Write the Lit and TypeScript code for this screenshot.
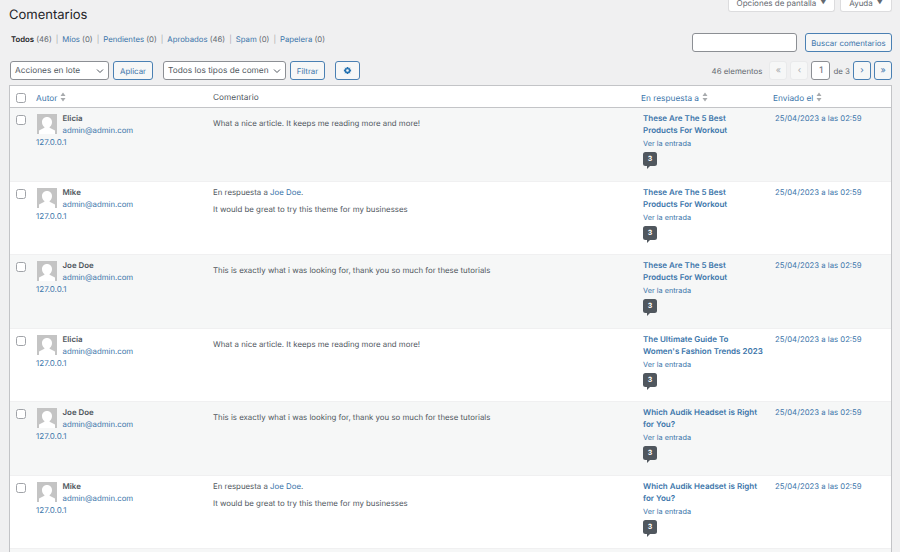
import { LitElement, html, css } from 'lit';
import { customElement } from 'lit/decorators.js';

const ELICIA = { name: 'Elicia', text: 'What a nice article. It keeps me reading more and more!', reply: false };
const MIKE = { name: 'Mike', text: 'It would be great to try this theme for my businesses', reply: true };
const JOE = { name: 'Joe Doe', text: 'This is exactly what i was looking for, thank you so much for these tutorials', reply: false };

const WORKOUT = ['These Are The 5 Best', 'Products For Workout'];
const FASHION = ['The Ultimate Guide To', "Women's Fashion Trends 2023"];
const AUDIK = ['Which Audik Headset is Right', 'for You?'];

const ROWS = [
  { ...ELICIA, post: WORKOUT },
  { ...MIKE, post: WORKOUT },
  { ...JOE, post: WORKOUT },
  { ...ELICIA, post: FASHION },
  { ...JOE, post: AUDIK },
  { ...MIKE, post: AUDIK },
];

const LINKS = [
  ['Todos', 46],
  ['Míos', 0],
  ['Pendientes', 0],
  ['Aprobados', 46],
  ['Spam', 0],
  ['Papelera', 0],
];

@customElement('app-root')
export class AppRoot extends LitElement {
  static styles = css`
    :host {
      display: block;
      height: 552px;
      overflow: hidden;
      background: #f0f0f1;
      color: #50575e;
      font-family: Inter, 'Liberation Sans', sans-serif;
      font-size: 7.85px;
      line-height: 12px;
      padding: 0 8px 0 9px;
      box-sizing: border-box;
      text-rendering: geometricPrecision;
    }

    a {
      color: #3b75aa;
      text-decoration: none;
    }

    .meta {
      display: flex;
      justify-content: flex-end;
      gap: 5px;
      height: 12px;
    }

    .tab {
      display: flex;
      align-items: flex-end;
      justify-content: center;
      gap: 4px;
      height: 12px;
      box-sizing: border-box;
      padding-bottom: 5px;
      background: #fff;
      border: 1px solid #dcdcde;
      border-top: none;
      border-radius: 0 0 3px 3px;
      color: #646970;
      font-size: 8px;
      line-height: 6px;
    }

    .tab.screen { width: 107px; }
    .tab.help { width: 52px; }
    .tab span.arrow { font-size: 6px; }

    h1 {
      margin: -5px 0 0;
      font-size: 13px;
      font-weight: 400;
      line-height: 16px;
      color: #1d2327;
    }

    .filters {
      display: flex;
      justify-content: space-between;
      align-items: flex-start;
      margin-top: 9px;
    }

    .views {
      display: flex;
      margin: 0 0 0 2px;
      padding: 1px 0 0;
      list-style: none;
      font-size: 7.75px;
      line-height: 12px;
      color: #646970;
    }

    .views li { white-space: pre; }
    .views .sep { color: #a7aaad; padding: 0 4px; }
    .views .current { color: #1d2327; font-weight: 600; }

    .search {
      display: flex;
      gap: 8px;
      margin-top: 1px;
    }

    .search .box {
      width: 105px;
      height: 19px;
      box-sizing: border-box;
      background: #fff;
      border: 1px solid #8c8f94;
      border-radius: 3px;
    }

    .btn {
      display: flex;
      align-items: center;
      justify-content: center;
      height: 19px;
      box-sizing: border-box;
      border: 1px solid #4a80b3;
      border-radius: 3px;
      background: #f6f7f7;
      color: #3b75aa;
      font-size: 7.9px;
    }

    .toolbar {
      display: flex;
      align-items: center;
      margin-top: 9px;
      height: 19px;
    }

    .select {
      display: flex;
      align-items: center;
      height: 19px;
      box-sizing: border-box;
      background: #fff;
      border: 1px solid #8c8f94;
      border-radius: 3px;
      padding-left: 4px;
      font-size: 8.3px;
      position: relative;
      white-space: nowrap;
      overflow: hidden;
    }

    .select svg {
      position: absolute;
      right: 4px;
      top: 6px;
      background: #fff;
    }

    .pager {
      display: flex;
      align-items: center;
      margin-left: auto;
      gap: 3px;
      color: #646970;
      font-size: 7.9px;
    }

    .pager .count { margin-right: 4px; }

    .page {
      display: flex;
      align-items: center;
      justify-content: center;
      width: 18px;
      height: 19px;
      box-sizing: border-box;
      border-radius: 3px;
      font-size: 9px;
    }

    .page.off {
      background: #f6f7f7;
      border: 1px solid #e9eaeb;
      color: #a7aaad;
    }

    .page.on {
      background: #f6f7f7;
      border: 1px solid #4a80b3;
      color: #3b75aa;
    }

    .page.num {
      width: 19px;
      background: #fff;
      border: 1px solid #8c8f94;
      color: #646970;
    }

    table {
      width: 883px;
      margin-top: 5px;
      table-layout: fixed;
      border-collapse: separate;
      border-spacing: 0;
      background: #fff;
      border: 1px solid #c3c4c7;
    }

    th {
      height: 22px;
      padding: 3px 0 0;
      box-sizing: border-box;
      text-align: left;
      font-weight: 400;
      font-size: 8.3px;
      border-bottom: 1px solid #c3c4c7;
      color: #50575e;
    }

    th .sort {
      display: inline-block;
      vertical-align: -1px;
      margin-left: 3px;
    }

    td {
      height: 73.5px;
      padding: 4px 0 0;
      box-sizing: border-box;
      vertical-align: top;
      border-bottom: 1px solid #f0f0f1;
    }

    tr.odd td { background: #f6f7f7; }

    .check {
      display: block;
      width: 10px;
      height: 10px;
      margin-left: 6px;
      box-sizing: border-box;
      background: #fff;
      border: 1px solid #a0a3a8;
      border-radius: 2.5px;
    }

    td .check { margin-top: 3px; }

    .who {
      display: flex;
      gap: 5.5px;
    }

    .avatar {
      display: block;
      width: 20px;
      height: 20px;
      margin: 2px 0 0 1px;
    }

    .who .name {
      font-weight: 600;
      color: #50575e;
      font-size: 7.9px;
    }

    .who a {
      font-size: 7.8px;
    }

    .ip {
      display: block;
      font-size: 8px;
    }

    .body p {
      margin: 0;
    }

    .body p.quote {
      margin: 0 0 5px;
    }

    .body p.only {
      margin-top: 5px;
    }

    .post {
      display: block;
      padding-left: 2px;
      font-weight: 600;
      font-size: 8px;
      white-space: nowrap;
    }

    .view {
      display: block;
      padding-left: 2px;
      margin-top: 2px;
      font-size: 7.3px;
    }

    .bubble {
      display: block;
      position: relative;
      width: 14px;
      height: 14px;
      margin: 2px 0 0 2px;
      background: #50575e;
      border-radius: 2.5px;
      color: #fff;
      font-size: 7px;
      font-weight: 700;
      line-height: 14px;
      text-align: center;
    }

    .bubble::after {
      content: '';
      position: absolute;
      left: 4px;
      bottom: -3px;
      border-top: 3px solid #50575e;
      border-right: 3px solid transparent;
    }

    .sent {
      display: block;
      padding-left: 2px;
      font-size: 7.75px;
    }
  `;

  private sortIcon() {
    return html`<svg class="sort" width="6" height="10" viewBox="0 0 6 10"><path d="M3 0.5 5.500 4H.5z M3 9.500 .5 6h5z" fill="#a7aaad"/></svg>`;
  }

  private chevron() {
    return html`<svg width="8" height="6" viewBox="0 0 8 6"><path d="M1 1.500 4 4.500 7 1.500" fill="none" stroke="#50575e" stroke-width="1"/></svg>`;
  }

  private avatar() {
    return html`<svg class="avatar" viewBox="0 0 20 20">
      <rect width="20" height="20" fill="#c4c4c4"/>
      <path d="M10 3c3 0 5 2.200 5 5.200 0 2-1 3.800-2.400 4.800v.8L18 16.500V20H2v-3.500L7.400 13.800V13C6 12 5 10.200 5 8.200 5 5.200 7 3 10 3z" fill="#fff"/>
    </svg>`;
  }

  render() {
    return html`
      <div class="meta">
        <div class="tab screen">Opciones de pantalla <span class="arrow">▼</span></div>
        <div class="tab help">Ayuda <span class="arrow">▼</span></div>
      </div>
      <h1>Comentarios</h1>

      <div class="filters">
        <ul class="views">
          ${LINKS.map(([label, count], i) => html`
            <li>${i === 0
              ? html`<span class="current">${label}</span>`
              : html`<a href="#">${label}</a>`} (${count})${i < LINKS.length - 1 ? html`<span class="sep">|</span>` : ''}</li>
          `)}
        </ul>
        <div class="search">
          <div class="box"></div>
          <div class="btn" style="width:87px">Buscar comentarios</div>
        </div>
      </div>

      <div class="toolbar">
        <div class="select" style="width:99px;margin-left:1px">Acciones en lote${this.chevron()}</div>
        <div class="btn" style="width:40px;margin-left:4px">Aplicar</div>
        <div class="select" style="width:123px;margin-left:10px">Todos los tipos de comen${this.chevron()}</div>
        <div class="btn" style="width:35px;margin-left:4px">Filtrar</div>
        <div class="btn" style="width:25px;margin-left:10px">
          <svg width="9" height="9" viewBox="0 0 20 20"><path fill="#2271b1" d="M18 12h-2.180c-.170.700-.470 1.350-.850 1.940L16.500 15.500 15.500 16.500l-1.560-1.530c-.590.380-1.240.680-1.940.850V18H8v-2.180c-.700-.170-1.350-.470-1.940-.850L4.500 16.500 3.500 15.500l1.530-1.560c-.380-.590-.680-1.240-.850-1.940H2V8h2.180c.170-.700.470-1.350.850-1.940L3.500 4.500 4.500 3.500l1.560 1.530c.590-.380 1.240-.680 1.940-.850V2h4v2.180c.700.170 1.350.470 1.940.850L15.500 3.500 16.500 4.500l-1.530 1.560c.380.590.680 1.240.850 1.940H18v4zM10 13a3 3 0 1 0 0-6 3 3 0 0 0 0 6z"/></svg>
        </div>
        <div class="pager">
          <span class="count">46 elementos</span>
          <span class="page off">«</span>
          <span class="page off">‹</span>
          <span class="page num">1</span>
          <span>de 3</span>
          <span class="page on">›</span>
          <span class="page on">»</span>
        </div>
      </div>

      <table>
        <colgroup>
          <col style="width:26px" />
          <col style="width:177px" />
          <col style="width:428px" />
          <col style="width:132px" />
          <col />
        </colgroup>
        <thead>
          <tr>
            <th><span class="check"></span></th>
            <th><a href="#">Autor</a>${this.sortIcon()}</th>
            <th>Comentario</th>
            <th><a href="#">En respuesta a</a>${this.sortIcon()}</th>
            <th><a href="#">Enviado el</a>${this.sortIcon()}</th>
          </tr>
        </thead>
        <tbody>
          ${ROWS.map((r, i) => html`
            <tr class=${i % 2 === 0 ? 'odd' : ''}>
              <td><span class="check"></span></td>
              <td>
                <div class="who">
                  ${this.avatar()}
                  <div>
                    <div class="name">${r.name}</div>
                    <a href="#">admin@admin.com</a>
                  </div>
                </div>
                <a class="ip" href="#">127.0.0.1</a>
              </td>
              <td class="body">
                ${r.reply ? html`<p class="quote">En respuesta a <a href="#">Joe Doe</a>.</p>` : ''}
                <p class=${r.reply ? '' : 'only'}>${r.text}</p>
              </td>
              <td>
                ${r.post.map(line => html`<a class="post" href="#">${line}</a>`)}
                <a class="view" href="#">Ver la entrada</a>
                <span class="bubble">3</span>
              </td>
              <td><a class="sent" href="#">25/04/2023 a las 02:59</a></td>
            </tr>
          `)}
          <tr class="odd"><td colspan="5"></td></tr>
        </tbody>
      </table>
    `;
  }
}

declare global {
  interface HTMLElementTagNameMap {
    'app-root': AppRoot;
  }
}
